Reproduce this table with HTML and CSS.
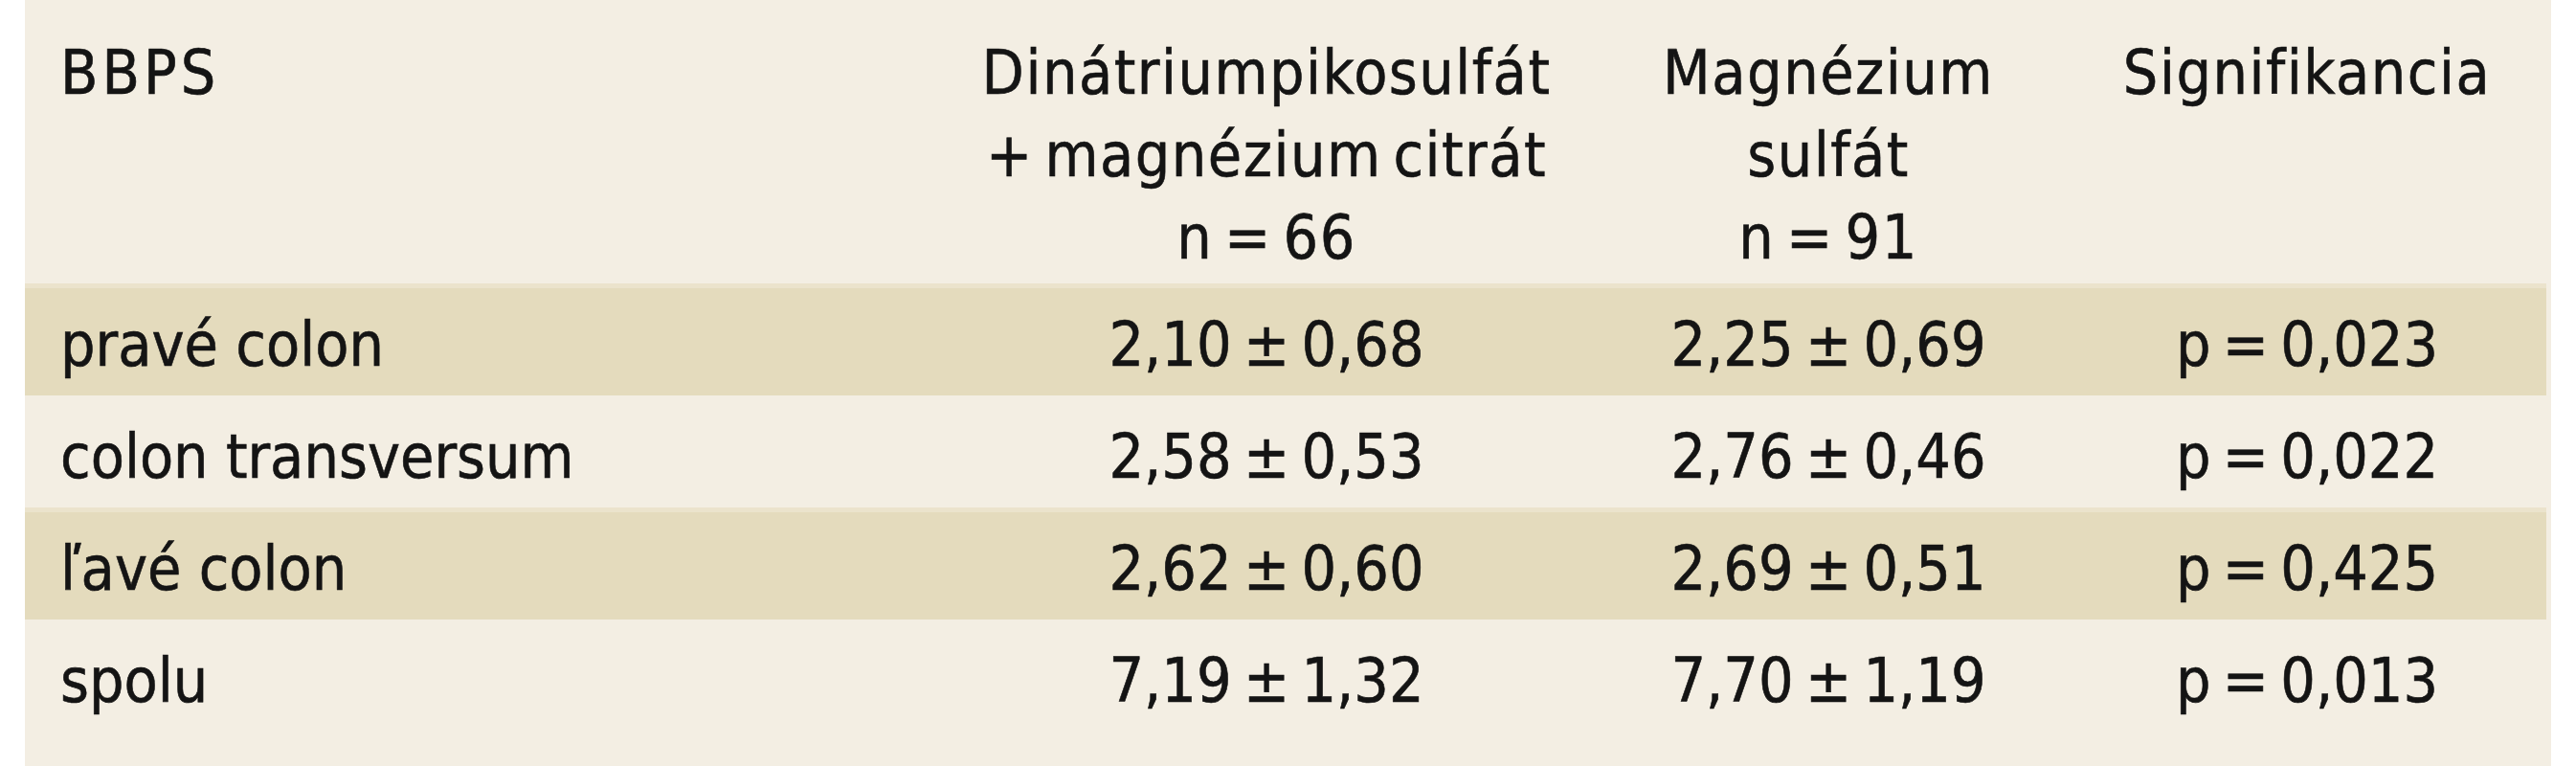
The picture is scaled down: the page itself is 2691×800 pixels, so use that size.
FILE: index.html
```html
<!DOCTYPE html>
<html lang="sk">
<head>
<meta charset="utf-8">
<title>BBPS</title>
<link rel="stylesheet" href="styles.css">
</head>
<body>
<div class="panel">
  <div class="row head">
    <div class="cell label">BBPS</div>
    <div class="cell">Dinátriumpikosulfát<br>+ magnézium citrát<br>n = 66</div>
    <div class="cell">Magnézium<br>sulfát<br>n = 91</div>
    <div class="cell">Signifikancia</div>
  </div>
  <div class="row data tan">
    <div class="cell label">pravé colon</div>
    <div class="cell num">2,10 ± 0,68</div>
    <div class="cell num">2,25 ± 0,69</div>
    <div class="cell num">p = 0,023</div>
  </div>
  <div class="row data">
    <div class="cell label">colon transversum</div>
    <div class="cell num">2,58 ± 0,53</div>
    <div class="cell num">2,76 ± 0,46</div>
    <div class="cell num">p = 0,022</div>
  </div>
  <div class="row data tan">
    <div class="cell label">ľavé colon</div>
    <div class="cell num">2,62 ± 0,60</div>
    <div class="cell num">2,69 ± 0,51</div>
    <div class="cell num">p = 0,425</div>
  </div>
  <div class="row data">
    <div class="cell label">spolu</div>
    <div class="cell num">7,19 ± 1,32</div>
    <div class="cell num">7,70 ± 1,19</div>
    <div class="cell num">p = 0,013</div>
  </div>
</div>
</body>
</html>
```
FILE: styles.css
```css
html, body {
  margin: 0;
  padding: 0;
  background: #ffffff;
}

body {
  font-family: "DejaVu Sans Condensed", "DejaVu Sans", sans-serif;
  font-stretch: condensed;
  font-size: 64px;
  color: #141414;
  -webkit-text-stroke: 0.6px #141414;
}

.panel {
  margin-left: 26px;
  width: 2639px;
  height: 800px;
  background: #f3eee3;
}

.row {
  display: grid;
  grid-template-columns: 974px 646px 528px 472px;
  width: 2634px;
  box-sizing: border-box;
  padding-right: 14px;
}

.head {
  padding-top: 33px;
  padding-bottom: 5px;
  line-height: 86px;
  letter-spacing: 1.5px;
  word-spacing: -8px;
}

.head .label {
  letter-spacing: 4px;
}

.data {
  height: 117px;
  box-sizing: border-box;
  border-top: 5px solid transparent;
  padding-top: 6px;
  line-height: 106px;
}

.tan {
  background: #e4dbbd;
  border-top-color: #ebe3cc;
}

.cell {
  text-align: center;
  white-space: nowrap;
}

.label {
  text-align: left;
  padding-left: 37px;
}

.num {
  word-spacing: -6px;
}
```
